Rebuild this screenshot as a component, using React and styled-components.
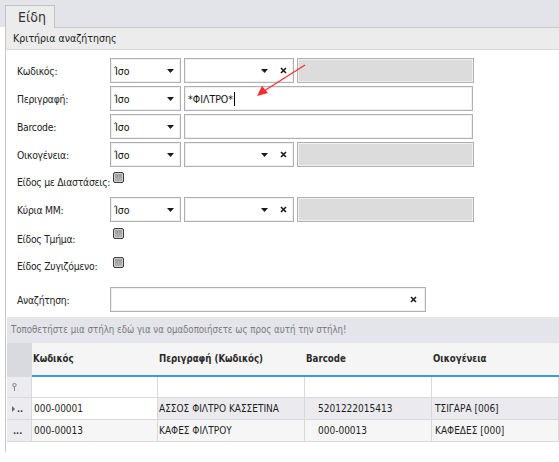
import React from "react";
import styled, { createGlobalStyle } from "styled-components";

const GlobalStyle = createGlobalStyle`
  html, body { margin: 0; padding: 0; background: #ffffff; }
  body {
    font-family: "DejaVu Sans Condensed", "DejaVu Sans", Tahoma, sans-serif;
    font-size: 10px;
    color: #1e1e1e;
  }
  * { box-sizing: border-box; }
`;

const Page = styled.div`
  position: relative;
  width: 559px;
  height: 462px;
  overflow: hidden;
  background: #fff;
`;

const TopBar = styled.div`
  height: 27px;
  background: #e3e4e9;
  display: flex;
  align-items: flex-end;
  padding-left: 5px;
`;

const Tab = styled.div`
  position: relative;
  z-index: 1;
  margin-bottom: -1px;
  height: 23px;
  width: 50px;
  background: #ececec;
  border: 1px solid #c3c3c6;
  border-bottom: none;
  font-size: 14px;
  color: #333;
  padding-left: 12px;
  line-height: 22px;
`;

const Panel = styled.div`
  margin-left: 5px;
  border-left: 1px solid #c6c6c9;
  height: 425px;
  display: flex;
  flex-direction: column;
`;

const SectionHeader = styled.div`
  height: 23px;
  background: #ececec;
  border-top: 1px solid #c9c9cc;
  border-bottom: 1px solid #d8d8d8;
  padding-left: 7px;
  line-height: 21px;
  font-size: 10.5px;
  color: #222;
`;

const Form = styled.div`
  display: flex;
  flex-direction: column;
  padding: 8px 0 0 11px;
`;

const Row = styled.div`
  display: flex;
  align-items: ${(p) => (p.$check ? "flex-start" : "center")};
  height: ${(p) => p.$h}px;
  margin-top: ${(p) => p.$mt ?? 3}px;
  &:first-child { margin-top: 0; }
`;

const Label = styled.div`
  width: 93px;
  flex: none;
  color: #222;
  white-space: nowrap;
  align-self: center;
  font-size: 10.3px;
  letter-spacing: -0.25px;
`;

const Box = styled.div`
  flex: none;
  width: ${(p) => p.$w}px;
  height: 25px;
  margin-left: ${(p) => p.$ml ?? 0}px;
  border: 1px solid #b1b1b1;
  box-shadow: inset 0 0 0 1px #efefef;
  background: ${(p) => (p.$disabled ? "#dcdcdc" : "#fff")};
  display: flex;
  align-items: center;
  padding-left: 3px;
  color: #111;
  font-size: 10.5px;
`;

const BoxText = styled.span`
  flex: 1;
  white-space: nowrap;
  display: flex;
  align-items: center;
`;

const Cursor = styled.span`
  display: inline-block;
  width: 1px;
  height: 14px;
  background: #000;
  margin-left: 1px;
`;

const IconSlot = styled.span`
  width: ${(p) => p.$w}px;
  flex: none;
  display: flex;
  align-items: center;
  justify-content: center;
`;

const CheckBox = styled.span`
  width: 11px;
  height: 11px;
  margin-top: ${(p) => p.$mt}px;
  margin-left: 3px;
  border: 1px solid #3c3c3c;
  border-radius: 2px;
  background: linear-gradient(#9a9a9a, #b5b5b5);
  box-shadow: inset 0 0 0 1px #d0d0d0;
  flex: none;
`;

const Caret = () => (
  <svg width="7" height="4" viewBox="0 0 7 4">
    <path d="M0 0H7L3.5 4Z" fill="#1a1a1a" />
  </svg>
);

const Cross = () => (
  <svg width="7" height="7" viewBox="0 0 7 7">
    <path d="M1 1L6 6M6 1L1 6" stroke="#1a1a1a" strokeWidth="1.6" />
  </svg>
);

const Operator = () => (
  <Box $w={71}>
    <BoxText>Ίσο</BoxText>
    <IconSlot $w={20}>
      <Caret />
    </IconSlot>
  </Box>
);

const ValueCombo = () => (
  <Box $w={110} $ml={3}>
    <BoxText />
    <IconSlot $w={18}>
      <Caret />
    </IconSlot>
    <IconSlot $w={20}>
      <Cross />
    </IconSlot>
  </Box>
);

/* ---------- grid ---------- */

const Grid = styled.div`
  margin-top: 5px;
  margin-left: 1px;
  display: flex;
  flex-direction: column;
`;

const GroupPanel = styled.div`
  height: 26px;
  background: #e4e5ea;
  color: #7a7a7a;
  padding-left: 4px;
  line-height: 26px;
  white-space: nowrap;
  font-size: 9.6px;
`;

const cols = "25px 126px 147px 127px 1fr";

const HeaderRow = styled.div`
  display: grid;
  grid-template-columns: ${cols};
  height: 34px;
  background: #f5f5f5;
`;

const IndicatorHead = styled.div`
  background: #d9dae0;
`;

const HeadCell = styled.div`
  display: flex;
  align-items: center;
  font-weight: bold;
  color: #2a2a2a;
  padding-left: 1px;
  border-bottom: 2px solid #3d9ddc;
  padding-bottom: 1px;
  white-space: nowrap;
  font-size: 9.6px;
`;

const BodyRow = styled.div`
  display: grid;
  grid-template-columns: ${cols};
  height: ${(p) => p.$h}px;
  background: ${(p) => p.$bg};
  border-bottom: 1px solid #d9d9dc;
`;

const Cell = styled.div`
  display: flex;
  align-items: center;
  padding-left: ${(p) => p.$pl ?? 2}px;
  border-right: 1px solid #d9d9dc;
  background: ${(p) => p.$bg ?? "transparent"};
  white-space: nowrap;
  color: #1e1e1e;
  overflow: hidden;
`;

const Indicator = styled.div`
  display: flex;
  align-items: center;
  padding-left: ${(p) => p.$pl}px;
  gap: 2px;
  background: #ececf0;
  border-right: 1px solid #d9d9dc;
  color: #333;
  font-size: 8px;
`;

const Dots = styled.span`
  font-weight: bold;
  font-size: 9px;
  line-height: 1;
  transform: translateY(1px);
`;

const Arrow = styled.svg`
  position: absolute;
  left: 0;
  top: 0;
  pointer-events: none;
`;

const PinIcon = () => (
  <svg width="5" height="8" viewBox="0 0 5 8">
    <circle cx="2.5" cy="2" r="1.7" fill="none" stroke="#888" strokeWidth="1" />
    <path d="M2.5 3.5V8" stroke="#888" strokeWidth="1" />
  </svg>
);

const RightTri = () => (
  <svg width="3" height="6" viewBox="0 0 3 6">
    <path d="M0 0L3 3L0 6Z" fill="#666" />
  </svg>
);

export default function App() {
  return (
    <Page>
      <GlobalStyle />
      <TopBar>
        <Tab>Είδη</Tab>
      </TopBar>
      <Panel>
        <SectionHeader>Κριτήρια αναζήτησης</SectionHeader>
        <Form>
          <Row $h={25}>
            <Label>Κωδικός:</Label>
            <Operator />
            <ValueCombo />
            <Box $w={177} $ml={3} $disabled />
          </Row>
          <Row $h={25}>
            <Label>Περιγραφή:</Label>
            <Operator />
            <Box $w={289} $ml={3}>
              <BoxText>
                *ΦΙΛΤΡΟ*
                <Cursor />
              </BoxText>
            </Box>
          </Row>
          <Row $h={25}>
            <Label>Barcode:</Label>
            <Operator />
            <Box $w={289} $ml={3} />
          </Row>
          <Row $h={25}>
            <Label>Οικογένεια:</Label>
            <Operator />
            <ValueCombo />
            <Box $w={177} $ml={3} $disabled />
          </Row>
          <Row $h={24} $check>
            <Label>Είδος με Διαστάσεις:</Label>
            <CheckBox $mt={2} />
          </Row>
          <Row $h={25}>
            <Label>Κύρια ΜΜ:</Label>
            <Operator />
            <ValueCombo />
            <Box $w={177} $ml={3} $disabled />
          </Row>
          <Row $h={28} $check>
            <Label>Είδος Τμήμα:</Label>
            <CheckBox $mt={3} />
          </Row>
          <Row $h={20} $check>
            <Label>Είδος Ζυγιζόμενο:</Label>
            <CheckBox $mt={1} />
          </Row>
          <Row $h={25} $mt={11}>
            <Label>Αναζήτηση:</Label>
            <Box $w={316}>
              <BoxText />
              <IconSlot $w={24}>
                <Cross />
              </IconSlot>
            </Box>
          </Row>
        </Form>
        <Grid>
          <GroupPanel>
            Τοποθετήστε μια στήλη εδώ για να ομαδοποιήσετε ως προς αυτή την στήλη!
          </GroupPanel>
          <HeaderRow>
            <IndicatorHead />
            <HeadCell>Κωδικός</HeadCell>
            <HeadCell>Περιγραφή (Κωδικός)</HeadCell>
            <HeadCell>Barcode</HeadCell>
            <HeadCell>Οικογένεια</HeadCell>
          </HeaderRow>
          <BodyRow $h={21} $bg="#ffffff">
            <Indicator $pl={5}>
              <PinIcon />
            </Indicator>
            <Cell />
            <Cell />
            <Cell />
            <Cell />
          </BodyRow>
          <BodyRow $h={22} $bg="#ebebef">
            <Indicator $pl={5}>
              <RightTri />
              <Dots>..</Dots>
            </Indicator>
            <Cell $bg="#ffffff">000-00001</Cell>
            <Cell $pl={1}>ΑΣΣΟΣ ΦΙΛΤΡΟ ΚΑΣΣΕΤΙΝΑ</Cell>
            <Cell $pl={13}>5201222015413</Cell>
            <Cell $pl={3}>ΤΣΙΓΑΡΑ [006]</Cell>
          </BodyRow>
          <BodyRow $h={22} $bg="#f6f6f6">
            <Indicator $pl={6}>
              <Dots>...</Dots>
            </Indicator>
            <Cell>000-00013</Cell>
            <Cell $pl={1}>ΚΑΦΕΣ ΦΙΛΤΡΟΥ</Cell>
            <Cell $pl={13}>000-00013</Cell>
            <Cell $pl={3}>ΚΑΦΕΔΕΣ [000]</Cell>
          </BodyRow>
        </Grid>
      </Panel>
      <Arrow width="559" height="462" viewBox="0 0 559 462">
        <path d="M305 65L264 91" stroke="#ff2a2a" strokeWidth="1.2" />
        <path d="M257 96L262 86L268 93Z" fill="#ff2a2a" />
      </Arrow>
    </Page>
  );
}
